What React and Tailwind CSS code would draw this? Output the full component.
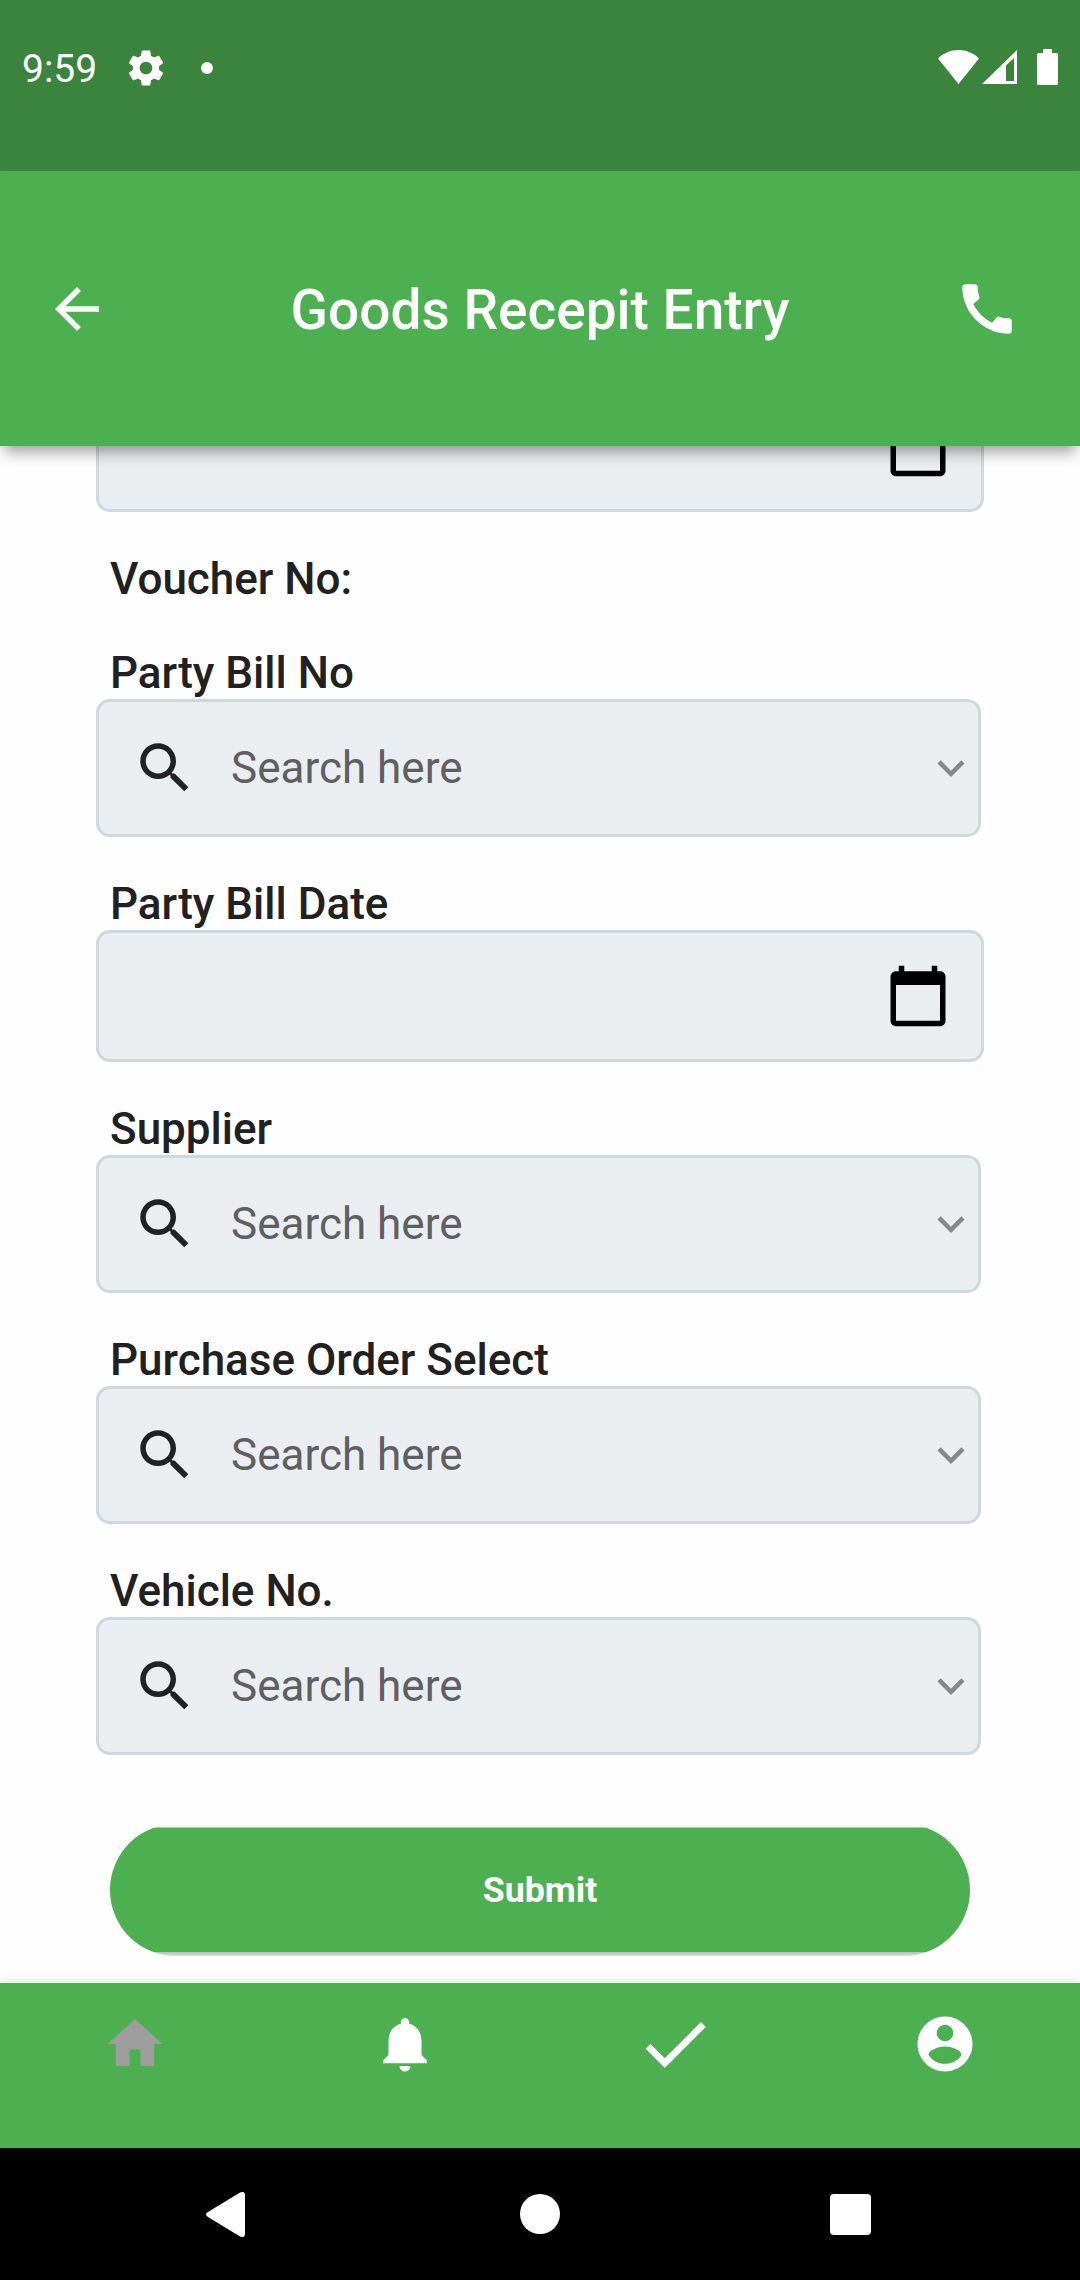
import React from 'react';

const ICONS = {
  settings:
    'M19.43 12.98c.04-.32.07-.64.07-.98s-.03-.66-.07-.98l2.11-1.65c.19-.15.24-.42.12-.64l-2-3.46c-.12-.22-.39-.3-.61-.22l-2.49 1c-.52-.4-1.08-.73-1.69-.98l-.38-2.65C14.46 2.18 14.25 2 14 2h-4c-.25 0-.46.18-.49.42l-.38 2.65c-.61.25-1.17.59-1.69.98l-2.49-1c-.23-.09-.49 0-.61.22l-2 3.46c-.13.22-.07.49.12.64l2.11 1.65c-.04.32-.07.65-.07.98s.03.66.07.98l-2.11 1.65c-.19.15-.24.42-.12.64l2 3.46c.12.22.39.3.61.22l2.49-1c.52.4 1.08.73 1.69.98l.38 2.65c.03.24.24.42.49.42h4c.25 0 .46-.18.49-.42l.38-2.65c.61-.25 1.17-.59 1.69-.98l2.49 1c.23.09.49 0 .61-.22l2-3.46c.12-.22.07-.49-.12-.64l-2.11-1.65zM12 15.6c-1.98 0-3.6-1.62-3.6-3.6s1.62-3.6 3.6-3.6 3.6 1.62 3.6 3.6-1.62 3.6-3.6 3.6z',
  back: 'M20 11H7.83l5.59-5.59L12 4l-8 8 8 8 1.41-1.41L7.83 13H20v-2z',
  call: 'M20.01 15.38c-1.23 0-2.42-.2-3.53-.56-.35-.12-.74-.03-1.01.24l-1.57 1.97c-2.83-1.35-5.48-3.9-6.89-6.83l1.95-1.66c.27-.28.35-.67.24-1.02-.37-1.11-.56-2.3-.56-3.53 0-.54-.45-.99-.99-.99H4.19C3.65 3 3 3.24 3 3.99 3 13.28 10.73 21 20.01 21c.71 0 .99-.63.99-1.18v-3.45c0-.54-.45-.99-.99-.99z',
  search:
    'M15.5 14h-.79l-.28-.27C15.41 12.59 16 11.11 16 9.5 16 5.91 13.09 3 9.5 3S3 5.91 3 9.5 5.91 16 9.5 16c1.61 0 3.09-.59 4.23-1.57l.27.28v.79l5 4.99L20.49 19l-4.99-5zm-6 0C7.01 14 5 11.99 5 9.5S7.01 5 9.5 5 14 7.01 14 9.5 11.99 14 9.5 14z',
  expand: 'M16.59 8.59L12 13.17 7.41 8.59 6 10l6 6 6-6z',
  calendar:
    'M20 3h-1V1h-2v2H7V1H5v2H4c-1.1 0-2 .9-2 2v16c0 1.1.9 2 2 2h16c1.1 0 2-.9 2-2V5c0-1.1-.9-2-2-2zm0 18H4V8h16v13z',
  home: 'M10 20v-6h4v6h5v-8h3L12 3 2 12h3v8z',
  bell: 'M12 22c1.1 0 2-.9 2-2h-4c0 1.1.89 2 2 2zm6-6v-5c0-3.07-1.64-5.64-4.5-6.32V4c0-.83-.67-1.5-1.5-1.5s-1.5.67-1.5 1.5v.68C7.63 5.36 6 7.92 6 11v5l-2 2v1h16v-1l-2-2z',
  check: 'M9 16.17L4.83 12l-1.42 1.41L9 19 21 7l-1.41-1.41z',
  account:
    'M12 2C6.48 2 2 6.48 2 12s4.48 10 10 10 10-4.48 10-10S17.52 2 12 2zm0 3c1.66 0 3 1.34 3 3s-1.34 3-3 3-3-1.34-3-3 1.34-3 3-3zm0 14.2c-2.5 0-4.71-1.28-6-3.22.03-1.99 4-3.08 6-3.08 1.99 0 5.97 1.09 6 3.08-1.29 1.94-3.5 3.22-6 3.22z',
};

function Icon({ name, className }) {
  return (
    <svg viewBox="0 0 24 24" fill="currentColor" className={className} aria-hidden="true">
      <path d={ICONS[name]} />
    </svg>
  );
}

function StatusBar() {
  return (
    <div className="flex h-[171px] shrink-0 items-start justify-between bg-[#3b843e] pt-[45px] pr-[22px] pl-[22px] text-white">
      <div className="flex h-[45px] items-center">
        <span className="w-[103px] pt-1 text-[39px] leading-[45px]">9:59</span>
        <Icon name="settings" className="size-[42px]" />
        <span className="ml-[34px] size-3 rounded-full bg-white" />
      </div>
      <div className="flex h-[45px] items-start pt-1">
        <svg viewBox="0 0 41 35" className="h-[35px] w-[41px]" fill="currentColor">
          <path d="M0 9.5C5.5 4 12.5 1 20.5 1S35.5 4 41 9.5L20.5 35z" />
        </svg>
        <svg viewBox="0 0 35 35" className="ml-[3px] h-[35px] w-[35px]" fill="currentColor">
          <path fillRule="evenodd" d="M35 1V35H0zM32 9L24 16.5V32H32z" />
        </svg>
        <svg viewBox="0 0 21 36" className="ml-5 h-9 w-[21px]" fill="currentColor">
          <path d="M6 0h9v4h4.5q1.5 0 1.5 1.5v29q0 1.5-1.5 1.5h-18Q0 36 0 34.5v-29Q0 4 1.5 4H6z" />
        </svg>
      </div>
    </div>
  );
}

function AppBar() {
  return (
    <header className="relative z-10 flex h-[275px] shrink-0 items-center justify-between bg-[#4caf50] pr-[60px] pl-[44px] text-white shadow-[0_10px_14px_-4px_rgba(0,0,0,0.38)]">
      <Icon name="back" className="size-[66px]" />
      <h1 className="ml-[16px] pt-0.5 text-[55px] leading-[64px] font-medium">Goods Recepit Entry</h1>
      <Icon name="call" className="size-[66px]" />
    </header>
  );
}

function Label({ children }) {
  return <div className="pl-[14px] text-[44px] leading-[52px] font-medium text-[#212121]">{children}</div>;
}

function SearchField({ label }) {
  return (
    <div>
      <Label>{label}</Label>
      <div className="flex h-[138px] w-[885px] items-center rounded-[14px] border-3 border-[#cfd8dc] bg-[#eaeef1] pl-[33px]">
        <Icon name="search" className="size-[66px] text-[#212121]" />
        <span className="ml-[33px] flex-1 text-[44px] leading-[52px] text-[#5e5f60]">Search here</span>
        <Icon name="expand" className="size-[54px] text-[#858788]" />
      </div>
    </div>
  );
}

function DateBox() {
  return (
    <div className="flex h-[132px] w-[888px] items-center justify-end rounded-[14px] border-3 border-[#cfd8dc] bg-[#eaeef1] pr-[30px]">
      <Icon name="calendar" className="size-[66px] text-black" />
    </div>
  );
}

const NAV_ITEMS = [
  { name: 'home', className: 'size-[66px] text-[#9e9e9e]' },
  { name: 'bell', className: 'size-[66px]' },
  { name: 'check', className: 'size-[82px]' },
  { name: 'account', className: 'size-[66px]' },
];

export default function App() {
  return (
    <div className="flex h-[2280px] w-[1080px] flex-col overflow-hidden bg-[#fefefe] font-['Roboto',sans-serif]">
      <StatusBar />
      <AppBar />
      <main className="flex h-[1537px] shrink-0 flex-col overflow-hidden pl-24">
        <div className="-mt-[66px] flex flex-col gap-[41px]">
          <DateBox />
          <div className="pb-px">
            <Label>Voucher No:</Label>
          </div>
          <SearchField label="Party Bill No" />
          <div>
            <Label>Party Bill Date</Label>
            <DateBox />
          </div>
          <SearchField label="Supplier" />
          <SearchField label="Purchase Order Select" />
          <SearchField label="Vehicle No." />
        </div>
        <button className="mt-[69px] ml-[14px] h-[132px] w-[860px] shrink-0 rounded-full bg-[linear-gradient(to_bottom,transparent_3px,#4caf50_4px,#4caf50_127.5px,#bdbdbd_128px,#dedada_132px)] text-[35.75px] leading-[42px] font-bold text-white">
          Submit
        </button>
      </main>
      <nav className="relative grid h-[165px] shrink-0 grid-cols-4 bg-[#4caf50] text-white shadow-[0_-2px_10px_rgba(0,0,0,0.1)]">
        {NAV_ITEMS.map((item) => (
          <div key={item.name} className="flex h-[122px] items-center justify-center">
            <Icon name={item.name} className={item.className} />
          </div>
        ))}
      </nav>
      <div className="relative flex h-[132px] shrink-0 items-center justify-between bg-black pr-[209px] pl-[206px]">
        <svg viewBox="0 0 39 45" className="h-[45px] w-[39px]" fill="white">
          <path d="M34 .6Q39-1.5 39 3.5V41.5Q39 46.5 34 44.4L2 25Q-2 22.5 2 20z" />
        </svg>
        <span className="ml-[5px] size-10 rounded-full bg-white" />
        <span className="size-[41px] rounded-[4px] bg-white" />
      </div>
    </div>
  );
}
